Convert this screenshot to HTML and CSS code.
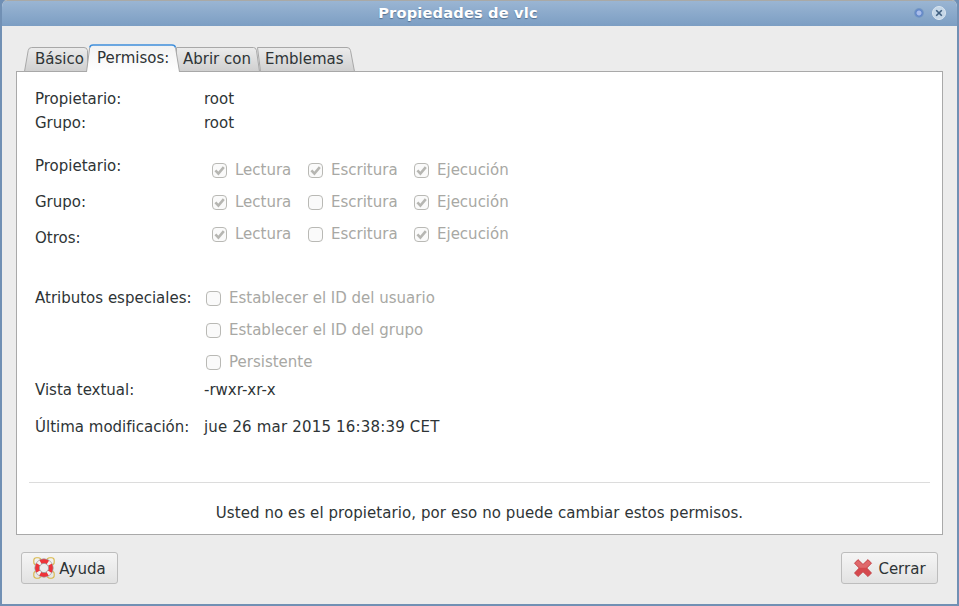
FILE: index.html
```html
<!DOCTYPE html>
<html lang="es">
<head>
<meta charset="utf-8">
<title>Propiedades de vlc</title>
<link rel="stylesheet" href="styles.css">
</head>
<body>
<svg class="defs" width="0" height="0" aria-hidden="true">
  <defs>
    <linearGradient id="tab-grad" x1="0" y1="0" x2="0" y2="1">
      <stop offset="0" stop-color="#ececec"/><stop offset="1" stop-color="#cfcfcf"/>
    </linearGradient>
    <linearGradient id="tab-active-grad" x1="0" y1="0" x2="0" y2="1">
      <stop offset="0" stop-color="#f2f2f2"/><stop offset="1" stop-color="#ffffff"/>
    </linearGradient>
    <symbol id="tick" viewBox="0 0 15 15">
      <path d="M3.4 7.4 6.4 10.6 11.8 4.2" fill="none" stroke="#b6b6b2" stroke-width="2.6"/>
    </symbol>
  </defs>
</svg>
<div class="window">
  <header class="titlebar">
    <h1 class="title">Propiedades de vlc</h1>
    <div class="wm-buttons">
      <span class="wm-min"></span>
      <span class="wm-close">
        <svg viewBox="0 0 8 8" width="8" height="8"><path d="M1.2 1.2 6.8 6.8M6.8 1.2 1.2 6.8" stroke="#3f5f80" stroke-width="1.6"/></svg>
      </span>
    </div>
  </header>
  <main class="body">
    <nav class="tabs">
      <span class="tab tab-first">
        <svg class="tab-bg" width="64" height="24"><path d="M.5 24.5 4.2 3.5Q4.7.5 7.7.5H60Q63 .5 63.5 3.5V24.5Z" fill="url(#tab-grad)" stroke="#a8a8a8"/></svg>
        <span class="tab-text">Básico</span>
      </span>
      <span class="tab tab-active">
        <svg class="tab-bg" width="94" height="28">
          <path d="M.5 28 3.7 3.5Q4.2 1 7 1H86Q89 1 89.5 3.5L93.5 28Z" fill="url(#tab-active-grad)"/>
          <path d="M.5 28 3.7 3.5" fill="none" stroke="#a8a8a8"/>
          <path d="M89.5 3.5 93.5 28" fill="none" stroke="#a8a8a8"/>
          <path d="M3.7 3.5Q4.2 1 7 1H86Q89 1 89.5 3.5" fill="none" stroke="#3f8fdc" stroke-width="1.4"/>
        </svg>
        <span class="tab-text">Permisos:</span>
      </span>
      <span class="tab tab-third">
        <svg class="tab-bg" width="84" height="24"><path d="M.5 24.5V.5H77.5Q80 .5 80.5 3.5L83.5 24.5Z" fill="url(#tab-grad)" stroke="#a8a8a8"/></svg>
        <span class="tab-text">Abrir con</span>
      </span>
      <span class="tab tab-last">
        <svg class="tab-bg" width="97" height="24"><path d="M2.5 24.5-.5 .5H89Q92 .5 92.5 3.5L96.5 24.5Z" fill="url(#tab-grad)" stroke="#a8a8a8"/></svg>
        <span class="tab-text">Emblemas</span>
      </span>
    </nav>
    <section class="panel">
      <div class="owner">
        <div class="label">Propietario:</div><div class="value">root</div>
        <div class="label">Grupo:</div><div class="value">root</div>
      </div>
      <div class="perms">
        <div class="label al-start">Propietario:</div>
        <div class="check-row">
          <span class="check"><span class="box"><svg width="15" height="15"><use href="#tick"/></svg></span>Lectura</span>
          <span class="check"><span class="box"><svg width="15" height="15"><use href="#tick"/></svg></span>Escritura</span>
          <span class="check"><span class="box"><svg width="15" height="15"><use href="#tick"/></svg></span>Ejecución</span>
        </div>
        <div class="label al-center">Grupo:</div>
        <div class="check-row">
          <span class="check"><span class="box"><svg width="15" height="15"><use href="#tick"/></svg></span>Lectura</span>
          <span class="check"><span class="box"></span>Escritura</span>
          <span class="check"><span class="box"><svg width="15" height="15"><use href="#tick"/></svg></span>Ejecución</span>
        </div>
        <div class="label al-end">Otros:</div>
        <div class="check-row">
          <span class="check"><span class="box"><svg width="15" height="15"><use href="#tick"/></svg></span>Lectura</span>
          <span class="check"><span class="box"></span>Escritura</span>
          <span class="check"><span class="box"><svg width="15" height="15"><use href="#tick"/></svg></span>Ejecución</span>
        </div>
      </div>
      <div class="special">
        <div class="label">Atributos especiales:</div>
        <div class="special-list">
          <span class="check"><span class="box"></span>Establecer el ID del usuario</span>
          <span class="check"><span class="box"></span>Establecer el ID del grupo</span>
          <span class="check"><span class="box"></span>Persistente</span>
        </div>
      </div>
      <div class="meta">
        <div class="label">Vista textual:</div><div class="value">-rwxr-xr-x</div>
        <div class="label">Última modificación:</div><div class="value date">jue 26 mar 2015 16:38:39 CET</div>
      </div>
      <div class="notice">Usted no es el propietario, por eso no puede cambiar estos permisos.</div>
    </section>
    <footer class="actions">
      <button class="btn btn-help" type="button">
        <svg width="24" height="24" viewBox="0 0 24 24">
          <g fill="none" stroke="#d9b84a" stroke-width="1.1">
            <rect x=".8" y="1.8" width="7" height="7" rx="2.6"/><rect x="14.2" y="1.8" width="7" height="7" rx="2.6"/>
            <rect x=".8" y="15.2" width="7" height="7" rx="2.6"/><rect x="14.2" y="15.2" width="7" height="7" rx="2.6"/>
          </g>
          <circle cx="11" cy="12" r="6.9" fill="none" stroke="#f2f2f2" stroke-width="4.6"/>
          <circle cx="11" cy="12" r="6.9" fill="none" stroke="#ee3339" stroke-width="4.6" stroke-dasharray="7.8 3.04" stroke-dashoffset="3.9"/>
          <circle cx="11" cy="12" r="9.2" fill="none" stroke="#9a9a9a" stroke-width=".7"/>
          <circle cx="11" cy="12" r="4.6" fill="#ececec" stroke="#8a8a8a" stroke-width=".7"/>
        </svg>
        <span class="btn-text">Ayuda</span>
      </button>
      <button class="btn btn-close" type="button">
        <svg width="20" height="20" viewBox="0 0 20 20">
          <path d="M1.5 5.2 5 1.6 10 6.4 15 1.6 18.5 5.2 13.8 10 18.5 15 15 18.6 10 13.8 5 18.6 1.5 15 6.2 10Z" fill="#d5484d" stroke="#c0393d" stroke-width=".8"/>
          <path d="M2 5.2 5 2.2 10 7 15 2.2 18 5.2 13.4 9.8 6.6 9.8Z" fill="#e98a8c" opacity=".5"/>
        </svg>
        <span class="btn-text">Cerrar</span>
      </button>
    </footer>
  </main>
</div>
</body>
</html>
```
FILE: styles.css
```css
* { box-sizing: border-box; }
html, body { margin: 0; padding: 0; }
body {
  width: 959px;
  height: 606px;
  overflow: hidden;
  font-family: "DejaVu Sans", sans-serif;
  font-size: 15px;
  line-height: 17px;
  color: #2e3436;
  background: #6f8fb5;
}
.defs { display: block; height: 0; }
.window {
  width: 959px;
  height: 606px;
  display: flex;
  flex-direction: column;
  border: 2px solid #7190b4;
  border-top: 0;
  border-radius: 7px 7px 0 0;
  overflow: hidden;
  background: #ececec;
}
.titlebar {
  height: 26px;
  flex: none;
  margin: 0 -2px;
  padding-right: 43px;
  display: flex;
  align-items: center;
  justify-content: center;
  background: linear-gradient(#9ab5d3, #7c9ec3);
  border-top: 1px solid #a9a9a6;
  border-radius: 7px 7px 0 0;
  position: relative;
}
.title {
  margin: 0 0 2px;
  font-size: 14.67px;
  font-weight: 700;
  line-height: 17px;
  color: #fff;
  letter-spacing: .15px;
  text-shadow: 0 1px 1px #55708f;
}
.wm-buttons {
  position: absolute;
  right: 13px;
  top: 5px;
  display: flex;
  align-items: center;
  gap: 8px;
}
.wm-min {
  width: 10px;
  height: 10px;
  border-radius: 50%;
  background: radial-gradient(circle, #a9bdea 0 2px, #5f84c8 3px, #7c9ec3 5px);
}
.wm-close {
  width: 14px;
  height: 14px;
  border-radius: 50%;
  display: flex;
  align-items: center;
  justify-content: center;
  background: #c5d7e8;
  border: 1px solid #dbe6f0;
}
.body {
  flex: 1;
  display: flex;
  flex-direction: column;
  padding: 18px 14px 0;
}
.tabs {
  height: 27px;
  flex: none;
  display: flex;
  align-items: flex-end;
  padding-left: 8px;
  position: relative;
  z-index: 1;
}
.tab {
  height: 24px;
  position: relative;
  display: flex;
  align-items: center;
  padding-top: 1px;
  color: #2e3436;
}
.tab-bg { position: absolute; left: 0; top: 0; display: block; overflow: visible; }
.tab-text { position: relative; white-space: nowrap; }
.tab-first { width: 64px; padding-left: 11px; }
.tab-active {
  width: 94px;
  height: 28px;
  margin: 0 0 -1px -2px;
  padding-left: 11px;
  z-index: 2;
}
.tab-third { width: 84px; margin-left: -4px; padding-left: 7px; }
.tab-last { width: 97px; margin-left: -2px; padding-left: 7px; }
.panel {
  height: 464px;
  flex: none;
  background: #fff;
  border: 1px solid #a9a9a9;
  padding: 19px 12px 0 18px;
  display: flex;
  flex-direction: column;
}
.owner {
  display: grid;
  grid-template-columns: 169px 1fr;
  row-gap: 7px;
}
.perms {
  display: grid;
  grid-template-columns: 169px 1fr;
  grid-auto-rows: 24px;
  row-gap: 8px;
  margin-top: 26px;
}
.al-start { align-self: start; }
.al-center { align-self: center; }
.al-end { align-self: end; margin-bottom: -1px; }
.check-row { display: flex; align-items: center; padding-left: 8px; }
.check {
  display: flex;
  align-items: center;
  gap: 8px;
  color: #a8a8a4;
}
.check-row .check { width: 106px; }
.check-row .check:first-child { width: 96px; }
.box {
  width: 15px;
  height: 15px;
  flex: none;
  border: 1px solid #b9b9b5;
  border-radius: 4px;
  background: #fafafa;
  position: relative;
}
.box svg { position: absolute; left: -1px; top: -1px; display: block; }
.special {
  display: grid;
  grid-template-columns: 169px 1fr;
  margin-top: 40px;
}
.special .label { padding-top: 4px; }
.special-list {
  display: flex;
  flex-direction: column;
  gap: 8px;
  padding-left: 2px;
}
.special-list .check { height: 24px; }
.meta {
  display: grid;
  grid-template-columns: 169px 1fr;
  row-gap: 20px;
  margin-top: 8px;
}
.date { letter-spacing: .18px; }
.notice {
  margin-top: auto;
  margin-left: -6px;
  height: 52px;
  border-top: 1px solid #dcdcdc;
  padding-top: 22px;
  text-align: center;
  letter-spacing: .07px;
}
.actions {
  display: flex;
  justify-content: space-between;
  padding: 17px 5px 0 5px;
}
.btn {
  height: 32px;
  display: flex;
  align-items: center;
  justify-content: center;
  gap: 2px;
  font: inherit;
  color: #2e3436;
  padding: 0;
  border: 1px solid #bdbdbd;
  border-radius: 3px;
  background: linear-gradient(#f5f5f5, #e2e2e2);
}
.btn-text { padding-top: 2px; }
.btn-help { width: 97px; }
.btn-close { width: 97px; gap: 5px; }
```
